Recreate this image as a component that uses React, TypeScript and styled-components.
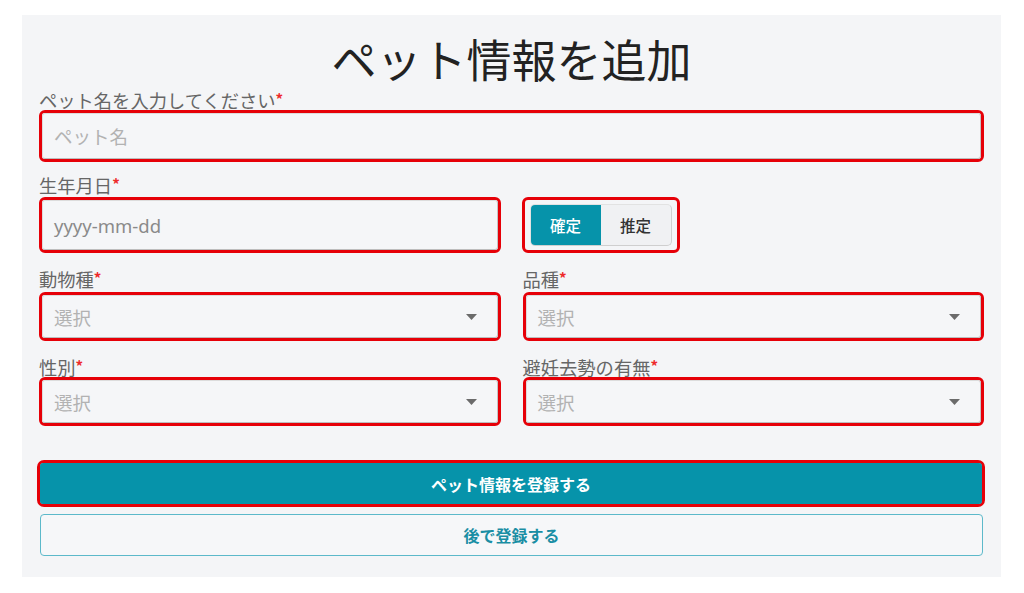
import React from "react";
import styled, { createGlobalStyle } from "styled-components";

const GlobalStyle = createGlobalStyle`
  html, body { margin: 0; padding: 0; background: #ffffff; }
  body { font-family: "Noto Sans", "Noto Sans CJK JP", sans-serif; }
  * { box-sizing: border-box; }
`;

const RED = "#e60008";
const TEAL = "#0693aa";

const Page = styled.div`
  padding: 15px 23px 0 22px;
`;

const Panel = styled.div`
  background: #f4f5f7;
  padding: 17px 17px 21px 17px;
  display: flex;
  flex-direction: column;
`;

const Title = styled.h1`
  margin: 0;
  text-align: center;
  font-family: "Noto Sans CJK JP", sans-serif;
  font-weight: 400;
  font-size: 45px;
  line-height: 54px;
  height: 54px;
  color: #222;
`;

const Label = styled.div<{ $mt: number }>`
  margin-top: ${(p) => p.$mt}px;
  font-family: "Noto Sans CJK JP", sans-serif;
  font-size: 18.3px;
  line-height: 20px;
  height: 20px;
  color: #666;
  white-space: nowrap;
`;

const Req = styled.span`
  color: #ee2a2a;
  font-size: 15px;
  font-weight: 700;
  line-height: 0;
  vertical-align: 3px;
`;

const Mark = styled.div<{ $h: number; $mt?: number }>`
  margin-top: ${(p) => p.$mt ?? 0}px;
  height: ${(p) => p.$h}px;
  border: 3px solid ${RED};
  border-radius: 6px;
  display: flex;
`;

const InputBox = styled.div`
  flex: 1;
  display: flex;
  align-items: center;
  justify-content: space-between;
  padding: 0 20px 0 11px;
  border: 1px solid #dcdcdc;
  border-right-color: #c4c4c4;
  border-bottom-color: #bdbdbd;
  border-radius: 3px;
  background: #f5f6f8;
`;

const Placeholder = styled.span<{ $dark?: boolean }>`
  font-family: "Noto Sans", "Noto Sans CJK JP", sans-serif;
  font-size: 18.5px;
  color: ${(p) => (p.$dark ? "#8a8a8a" : "#b2b2b2")};
`;

const Row = styled.div<{ $mt: number }>`
  margin-top: ${(p) => p.$mt}px;
  display: grid;
  grid-template-columns: 1fr 1fr;
  column-gap: 22px;
  align-items: start;
`;

const Col = styled.div`
  display: flex;
  flex-direction: column;
`;

const ToggleMark = styled.div`
  margin-top: 2px;
  width: 158px;
  height: 56px;
  border: 3px solid ${RED};
  border-radius: 6px;
  padding: 4px 5px 4px 5px;
  margin-left: -1px;
  display: flex;
`;

const Segmented = styled.div`
  flex: 1;
  display: flex;
  border: 1px solid #e2e2e2;
  border-right-color: #cfcfcf;
  border-bottom-color: #cfcfcf;
  border-radius: 5px;
  overflow: hidden;
  background: #f0f1f3;
`;

const Segment = styled.div<{ $active?: boolean }>`
  flex: 1;
  display: flex;
  align-items: center;
  justify-content: center;
  font-family: "Noto Sans CJK JP", sans-serif;
  font-size: 15.5px;
  font-weight: 500;
  background: ${(p) => (p.$active ? TEAL : "transparent")};
  color: ${(p) => (p.$active ? "#ffffff" : "#333")};
`;

const Arrow = () => (
  <svg width="11" height="6" viewBox="0 0 11 6">
    <polygon points="0,0 11,0 5.5,6" fill="#6b6b6b" />
  </svg>
);

const PrimaryMark = styled.div`
  margin: 34px -1px 0 -2px;
  height: 47px;
  border: 3px solid ${RED};
  border-radius: 7px;
  display: flex;
`;

const PrimaryButton = styled.button`
  flex: 1;
  border: none;
  border-radius: 3px;
  background: ${TEAL};
  color: #fff;
  font-family: "Noto Sans CJK JP", sans-serif;
  font-size: 16px;
  font-weight: 700;
  cursor: pointer;
`;

const SecondaryButton = styled.button`
  margin: 7px 1px 0 1px;
  height: 42px;
  border: 1.5px solid #5cb9ca;
  border-radius: 4px;
  background: #f6f7f9;
  color: #1a8ea4;
  font-family: "Noto Sans CJK JP", sans-serif;
  font-size: 16px;
  font-weight: 700;
  cursor: pointer;
`;

const Select = ({ label, mt }: { label: string; mt: number }) => (
  <Col>
    <Label $mt={0}>
      {label}
      <Req>*</Req>
    </Label>
    <Mark $h={49} $mt={mt}>
      <InputBox>
        <Placeholder>選択</Placeholder>
        <Arrow />
      </InputBox>
    </Mark>
  </Col>
);

export default function App() {
  return (
    <>
      <GlobalStyle />
      <Page>
        <Panel>
          <Title>ペット情報を追加</Title>
          <Label $mt={4}>
            ペット名を入力してください<Req>*</Req>
          </Label>
          <Mark $h={52}>
            <InputBox>
              <Placeholder>ペット名</Placeholder>
            </InputBox>
          </Mark>
          <Label $mt={13}>
            生年月日<Req>*</Req>
          </Label>
          <Row $mt={0}>
            <Mark $h={56} $mt={2}>
              <InputBox>
                <Placeholder $dark>yyyy-mm-dd</Placeholder>
              </InputBox>
            </Mark>
            <ToggleMark>
              <Segmented>
                <Segment $active>確定</Segment>
                <Segment>推定</Segment>
              </Segmented>
            </ToggleMark>
          </Row>
          <Row $mt={16}>
            <Select label="動物種" mt={3} />
            <Select label="品種" mt={3} />
          </Row>
          <Row $mt={16}>
            <Select label="性別" mt={0} />
            <Select label="避妊去勢の有無" mt={0} />
          </Row>
          <PrimaryMark>
            <PrimaryButton>ペット情報を登録する</PrimaryButton>
          </PrimaryMark>
          <SecondaryButton>後で登録する</SecondaryButton>
        </Panel>
      </Page>
    </>
  );
}
